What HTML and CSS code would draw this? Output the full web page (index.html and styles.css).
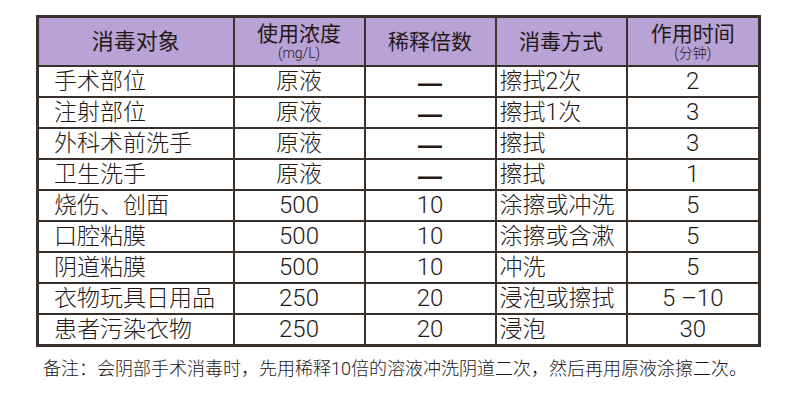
FILE: index.html
```html
<!DOCTYPE html>
<html lang="zh">
<head>
<meta charset="utf-8">
<link rel="stylesheet" href="styles.css">
</head>
<body>
<div class="page">
  <table class="tbl">
    <colgroup>
      <col class="c1"><col class="c2"><col class="c3"><col class="c4"><col class="c5">
    </colgroup>
    <thead>
      <tr>
        <th class="big">消毒对象</th>
        <th><span class="h-main">使用浓度</span><span class="h-sub">(mg/L)</span></th>
        <th>稀释倍数</th>
        <th>消毒方式</th>
        <th><span class="h-main">作用时间</span><span class="h-sub">(分钟)</span></th>
      </tr>
    </thead>
    <tbody>
      <tr><td class="l">手术部位</td><td>原液</td><td class="dash">—</td><td class="m">擦拭2次</td><td class="n">2</td></tr>
      <tr><td class="l">注射部位</td><td>原液</td><td class="dash">—</td><td class="m">擦拭1次</td><td class="n">3</td></tr>
      <tr><td class="l">外科术前洗手</td><td>原液</td><td class="dash">—</td><td class="m">擦拭</td><td class="n">3</td></tr>
      <tr><td class="l">卫生洗手</td><td>原液</td><td class="dash">—</td><td class="m">擦拭</td><td class="n">1</td></tr>
      <tr><td class="l">烧伤、创面</td><td class="n">500</td><td class="n">10</td><td class="m">涂擦或冲洗</td><td class="n">5</td></tr>
      <tr><td class="l">口腔粘膜</td><td class="n">500</td><td class="n">10</td><td class="m">涂擦或含漱</td><td class="n">5</td></tr>
      <tr><td class="l">阴道粘膜</td><td class="n">500</td><td class="n">10</td><td class="m">冲洗</td><td class="n">5</td></tr>
      <tr><td class="l">衣物玩具日用品</td><td class="n">250</td><td class="n">20</td><td class="m">浸泡或擦拭</td><td class="n">5 –10</td></tr>
      <tr><td class="l">患者污染衣物</td><td class="n">250</td><td class="n">20</td><td class="m">浸泡</td><td class="n">30</td></tr>
    </tbody>
  </table>
  <p class="note">备注：会阴部手术消毒时，先用稀释10倍的溶液冲洗阴道二次，然后再用原液涂擦二次。</p>
</div>
</body>
</html>
```

FILE: styles.css
```css
html, body {
  margin: 0;
  padding: 0;
  background: #ffffff;
}
body {
  font-family: Roboto, "Liberation Sans", "Noto Sans CJK SC", sans-serif;
  color: #231815;
}
.page {
  padding: 15px 0 0 36px;
}
.tbl {
  border-collapse: collapse;
  width: 722px;
  table-layout: fixed;
  border: 3px solid #3a302c;
}
.c1 { width: 196px; }
.c2 { width: 131px; }
.c3 { width: 131px; }
.c4 { width: 131px; }
.c5 { width: 133px; }
.tbl th, .tbl td {
  border: 2px solid #3a302c;
  padding: 0;
  text-align: center;
  vertical-align: middle;
  white-space: nowrap;
}
.tbl th {
  background: #b9a3d6;
  height: 47px;
  font-size: 21px;
  line-height: 24px;
  font-weight: normal;
}
.tbl th.big {
  font-size: 22px;
}
.h-main {
  display: block;
  font-size: 21px;
  line-height: 21px;
  margin-top: 2px;
}
.h-sub {
  display: block;
  font-size: 14px;
  line-height: 17px;
  font-weight: 300;
}
.tbl td {
  height: 29px;
  font-size: 23px;
  line-height: 29px;
  font-weight: 300;
}
.tbl td.n {
  font-size: 24px;
}
.tbl td.l {
  text-align: left;
  padding-left: 15px;
}
.tbl td.m {
  text-align: left;
  padding-left: 3px;
}
.tbl td.dash {
  font-family: "Liberation Sans", sans-serif;
  font-size: 24px;
  font-weight: bold;
  line-height: 27px;
  height: 27px;
  padding-top: 2px;
  vertical-align: top;
}
.note {
  margin: 11px 0 0 7px;
  font-size: 18px;
  line-height: 22px;
  font-weight: 300;
}
```
